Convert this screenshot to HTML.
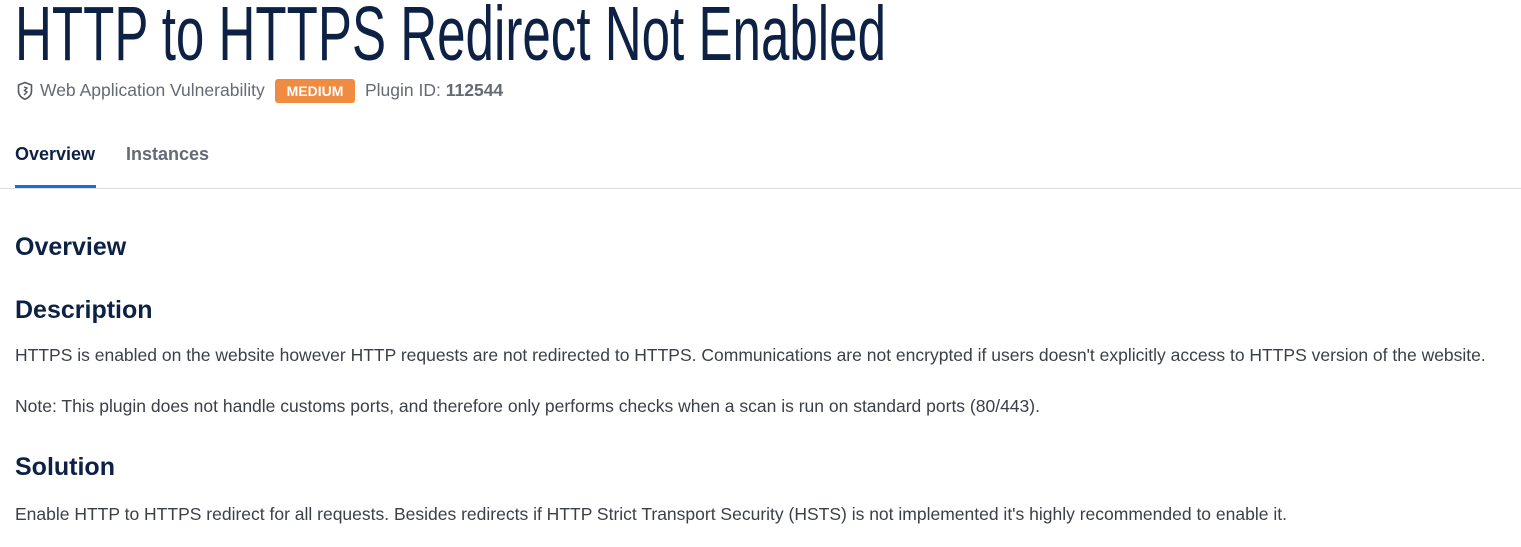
<!DOCTYPE html>
<html><head><meta charset="utf-8"><style>
body{margin:0;background:#fff;width:1521px;height:547px;overflow:hidden;font-family:"Liberation Sans",Arial,sans-serif;position:relative}
.a{position:absolute;white-space:nowrap}
.h{color:#0d2144;font-weight:bold;font-size:25px}
.p{color:#3b3f48;font-size:17.5px}
</style></head><body>
<svg class="a" style="left:0;top:0" width="1521" height="75"><text x="15" y="60" font-family="Liberation Sans" font-size="77" fill="#0d2144" textLength="871" lengthAdjust="spacingAndGlyphs">HTTP to HTTPS Redirect Not Enabled</text></svg>
<svg class="a" style="left:16px;top:81px" width="18" height="20" viewBox="0 0 18 20"><path d="M9 1.5 L15.5 4 V10 C15.5 14 12.5 16.8 9 18.3 C5.5 16.8 2.5 14 2.5 10 V4 Z" fill="none" stroke="#555a63" stroke-width="1.6"/><path d="M8 6 L11 7 L8.5 9.5 L11 11 L8 14" fill="none" stroke="#555a63" stroke-width="1.4"/></svg>
<div class="a" style="left:40px;top:80px;font-size:17.5px;color:#656a74;line-height:20px">Web Application Vulnerability</div>
<div class="a" style="left:275px;top:79px;width:80px;height:24px;background:#f08c41;border-radius:3px;color:#fff;font-weight:bold;font-size:14px;line-height:24px;text-align:center">MEDIUM</div>
<div class="a" style="left:365px;top:80px;font-size:17.5px;color:#656a74;line-height:20px">Plugin ID: <b>112544</b></div>
<div class="a" style="left:15px;top:143px;font-size:18px;font-weight:bold;color:#0d2144;line-height:22px">Overview</div>
<div class="a" style="left:126px;top:143px;font-size:18px;font-weight:bold;color:#656a74;line-height:22px">Instances</div>
<div class="a" style="left:0;top:188px;width:1521px;height:1px;background:#dcdde0"></div>
<div class="a" style="left:15px;top:185px;width:81px;height:3px;background:#1a6fd6"></div>
<div class="a h" style="left:15px;top:233px;line-height:28px">Overview</div>
<div class="a h" style="left:15px;top:296px;line-height:28px">Description</div>
<div class="a p" style="left:15px;top:345px;line-height:20px">HTTPS is enabled on the website however HTTP requests are not redirected to HTTPS. Communications are not encrypted if users doesn't explicitly access to HTTPS version of the website.</div>
<div class="a p" style="left:15px;top:396px;line-height:20px">Note: This plugin does not handle customs ports, and therefore only performs checks when a scan is run on standard ports (80/443).</div>
<div class="a h" style="left:15px;top:453px;line-height:28px">Solution</div>
<div class="a p" style="left:15px;top:504px;line-height:20px">Enable HTTP to HTTPS redirect for all requests. Besides redirects if HTTP Strict Transport Security (HSTS) is not implemented it's highly recommended to enable it.</div>
</body></html>
